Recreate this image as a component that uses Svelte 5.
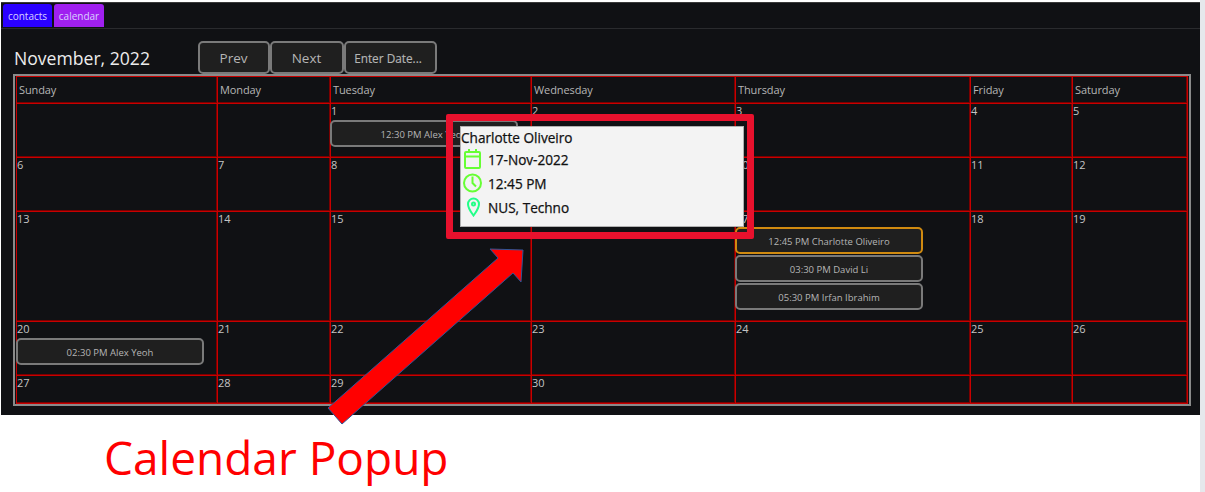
<script lang="ts">
  const days = ['Sunday', 'Monday', 'Tuesday', 'Wednesday', 'Thursday', 'Friday', 'Saturday'];

  type Cell = { day?: number; events?: { label: string; active?: boolean }[] };

  const weeks: { height: number; cells: Cell[] }[] = [
    {
      height: 54,
      cells: [
        {},
        {},
        { day: 1, events: [{ label: '12:30 PM Alex Yeoh' }] },
        { day: 2 },
        { day: 3 },
        { day: 4 },
        { day: 5 },
      ],
    },
    {
      height: 54,
      cells: [{ day: 6 }, { day: 7 }, { day: 8 }, { day: 9 }, { day: 10 }, { day: 11 }, { day: 12 }],
    },
    {
      height: 110,
      cells: [
        { day: 13 },
        { day: 14 },
        { day: 15 },
        { day: 16 },
        {
          day: 17,
          events: [
            { label: '12:45 PM Charlotte Oliveiro', active: true },
            { label: '03:30 PM David Li' },
            { label: '05:30 PM Irfan Ibrahim' },
          ],
        },
        { day: 18 },
        { day: 19 },
      ],
    },
    {
      height: 54,
      cells: [
        { day: 20, events: [{ label: '02:30 PM Alex Yeoh' }] },
        { day: 21 },
        { day: 22 },
        { day: 23 },
        { day: 24 },
        { day: 25 },
        { day: 26 },
      ],
    },
    {
      height: 28,
      cells: [{ day: 27 }, { day: 28 }, { day: 29 }, { day: 30 }, {}, {}, {}],
    },
  ];
</script>

<div class="page">
  <div class="app">
    <nav class="tabs">
      <button class="tab contacts">contacts</button>
      <button class="tab calendar">calendar</button>
    </nav>

    <div class="toolbar">
      <h1>November, 2022</h1>
      <button class="nav prev">Prev</button>
      <button class="nav next">Next</button>
      <button class="nav enter">Enter Date...</button>
    </div>

    <div class="frame">
      <div class="grid">
        {#each days as d}
          <div class="cell head">{d}</div>
        {/each}
        {#each weeks as week}
          {#each week.cells as cell}
            <div class="cell" style:height="{week.height}px">
              {#if cell.day}<div class="num">{cell.day}</div>{/if}
              {#each cell.events ?? [] as ev}
                <button class="event" class:active={ev.active}>{ev.label}</button>
              {/each}
            </div>
          {/each}
        {/each}
      </div>
    </div>
  </div>

  <div class="scroll"></div>

  <div class="popup">
    <div class="name">Charlotte Oliveiro</div>
    <div class="row">
      <svg width="20" height="20" viewBox="0 0 20 20" fill="none" stroke="#66ff33" stroke-width="2">
        <rect x="2" y="3" width="15" height="16" rx="1" />
        <path d="M2 7.5h15M6 0v4M13 0v4" />
      </svg>
      17-Nov-2022
    </div>
    <div class="row">
      <svg width="20" height="20" viewBox="0 0 20 20" fill="none" stroke="#66ff33" stroke-width="2">
        <circle cx="9.5" cy="10" r="8.5" />
        <path d="M9.500 3.500V10l3.500 3.500" />
      </svg>
      12:45 PM
    </div>
    <div class="row">
      <svg width="20" height="20" viewBox="0 0 20 20" fill="none" stroke="#22ff88" stroke-width="2">
        <path d="M10.500 18.500C8 15 5 11.500 5 7a5.500 5.500 0 0 1 11 0c0 4.500-3 8-5.500 11.500z" />
        <circle cx="10.500" cy="7" r="1.500" />
      </svg>
      NUS, Techno
    </div>
  </div>

  <div class="popup-ring"></div>

  <svg class="arrow" width="1205" height="492" viewBox="0 0 1205 492">
    <polygon
      points="328,408 342,424 513,273 521,282 523,250 490,249 498,258"
      fill="#ff0000"
      stroke="#2f5597"
      stroke-width="1"
    />
  </svg>

  <div class="caption">Calendar Popup</div>
</div>

<style>
  :global(body) {
    margin: 0;
    background: #fff;
  }

  .page {
    position: relative;
    width: 1205px;
    height: 492px;
    overflow: hidden;
    padding-top: 2px;
    box-sizing: border-box;
    background: #fff;
    font-family: 'Open Sans', 'Noto Sans', sans-serif;
  }

  .app {
    box-sizing: border-box;
    width: 1199px;
    height: 413px;
    margin-left: 1px;
    padding-top: 1px;
    background: #101114;
    border-top: 1px solid #3a3a3a;
  }

  .tabs {
    display: flex;
    gap: 2px;
    height: 23px;
    padding-left: 2px;
    padding-bottom: 1px;
    border-bottom: 1px solid #2a2b2e;
  }

  .tab {
    padding: 0;
    border: 0;
    border-radius: 3px 3px 0 0;
    color: #d9d0ff;
    font: 400 10px 'Open Sans', sans-serif;
  }

  .contacts {
    width: 49px;
    background: #2a00ff;
  }

  .calendar {
    width: 50px;
    background: #a020f0;
  }

  .toolbar {
    display: flex;
    align-items: flex-start;
    height: 45px;
    padding: 12px 0 0 13px;
    box-sizing: border-box;
  }

  h1 {
    width: 184px;
    margin: 5px 0 0;
    color: #ececec;
    font-size: 17.6px;
    font-weight: 400;
    line-height: 24px;
  }

  .nav {
    height: 33px;
    padding: 0;
    box-sizing: border-box;
    background: #1f1f1f;
    border: 2px solid #7a7a7a;
    border-radius: 5px;
    color: #b5b5b5;
    font: 400 13.5px 'Open Sans', sans-serif;
  }

  .prev {
    width: 72px;
    padding-right: 1px;
  }

  .next {
    width: 74px;
    padding-right: 1px;
  }

  .enter {
    width: 93px;
    padding-right: 5px;
    font-size: 11.8px;
    -webkit-text-stroke: 0.15px #b5b5b5;
  }

  .frame {
    box-sizing: border-box;
    width: 1178px;
    margin-left: 12px;
    border: 2px solid #8a8a8a;
    background: #101114;
  }

  .grid {
    display: grid;
    grid-template-columns: 201px 113px 201px 204px 235px 102px 115px;
    box-sizing: border-box;
    margin-left: 1px;
    width: 1172px;
    border-top: 1px solid #c80000;
    border-left: 1px solid #c80000;
  }

  .cell {
    box-sizing: border-box;
    padding: 0;
    border-right: 1px solid #c80000;
    border-bottom: 1px solid #c80000;
    box-shadow: inset -1px 0 0 #7a0000, inset 0 -1px 0 #7a0000;
    color: #cfcfcf;
  }

  .head {
    height: 27px;
    padding: 5px 0 0 2px;
    color: #b5b5b5;
    font-size: 11px;
    letter-spacing: -0.1px;
    line-height: 16px;
  }

  .num {
    height: 16px;
    color: #c4c4c4;
    font-size: 11px;
    line-height: 14px;
  }

  .event {
    display: block;
    position: relative;
    width: 188px;
    height: 27px;
    margin: 0 0 1px -1px;
    padding: 1px 0 0;
    box-sizing: border-box;
    background: #1f1f1f;
    border: 2px solid #7a7a7a;
    border-radius: 5px;
    color: #b5b5b5;
    font: 400 9.5px 'Open Sans', sans-serif;
  }

  .event.active {
    margin-top: -1px;
    border-color: #d08a10;
  }

  .scroll {
    position: absolute;
    top: 0;
    right: 0;
    width: 5px;
    height: 492px;
    background: #e6e8ec;
  }

  .popup {
    position: absolute;
    left: 460px;
    top: 126px;
    box-sizing: border-box;
    width: 284px;
    height: 101px;
    padding: 2px 0 0 0;
    background: #f3f3f3;
    border: 1px solid #b0b0b0;
    color: #111;
    font-size: 13.6px;
    -webkit-text-stroke: 0.25px #111;
  }

  .name {
    height: 18px;
    line-height: 18px;
  }

  .row {
    display: flex;
    align-items: center;
    gap: 5px;
    height: 24px;
    padding-left: 2px;
  }

  .popup-ring {
    position: absolute;
    left: 446px;
    top: 114px;
    box-sizing: border-box;
    width: 308px;
    height: 125px;
    border: 7px solid #e8112d;
    border-radius: 2px;
  }

  .arrow {
    position: absolute;
    left: 0;
    top: 0;
  }

  .caption {
    position: absolute;
    left: 104px;
    top: 427px;
    color: #ff0000;
    font-size: 46px;
    line-height: 60px;
  }
</style>
